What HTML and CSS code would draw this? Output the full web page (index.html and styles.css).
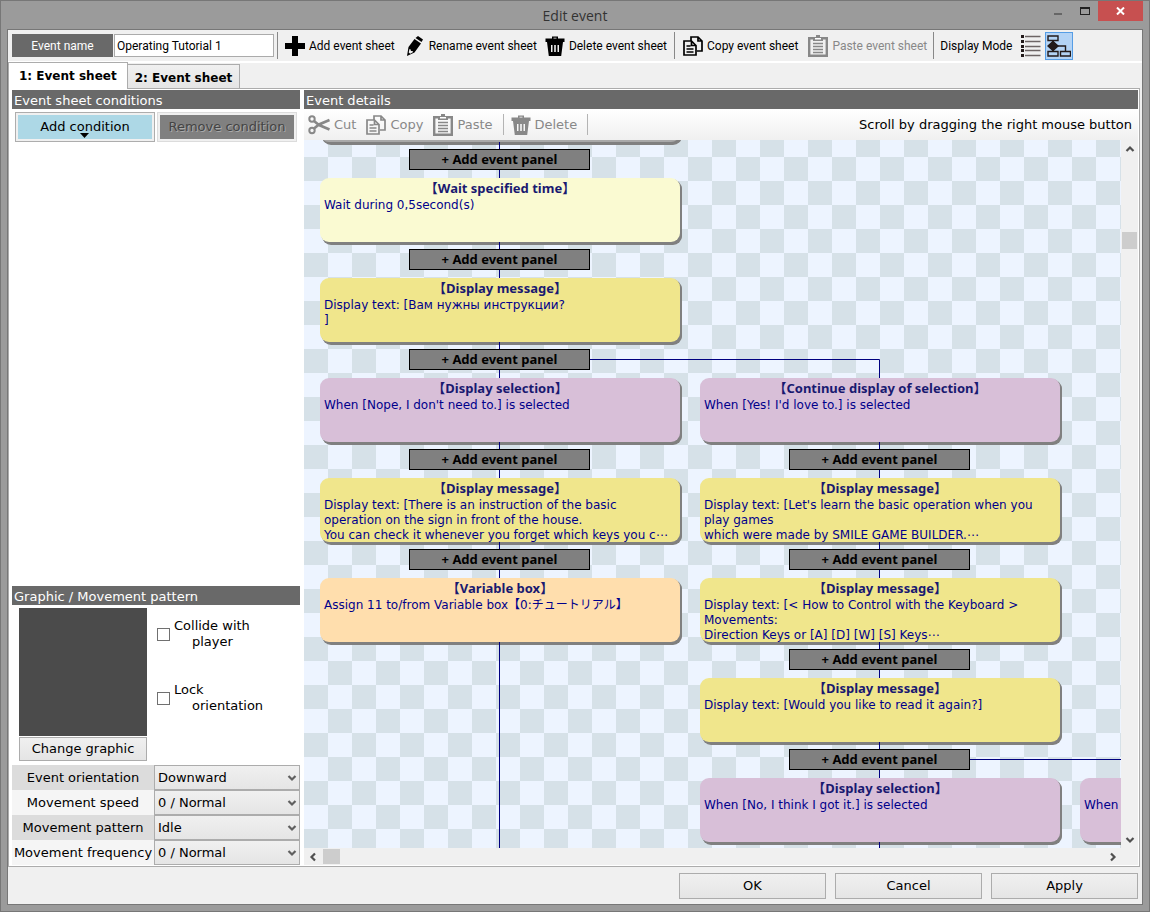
FILE: index.html
```
<!DOCTYPE html>
<html lang="en">
<head>
<meta charset="utf-8">
<title>Edit event</title>
<link rel="stylesheet" href="styles.css">
</head>
<body>
<svg class="defs" aria-hidden="true">
  <symbol id="i-trash" viewBox="0 0 20 20"><path d="M7 2.500V.5h6v2h6.500V6H.5V2.500zM8.500 2.500h3V1.800h-3z" fill="currentColor" fill-rule="evenodd"/><path d="M2 6h16l-1.800 14H3.800zM6 9v7h1.500V9zm3.200 0v7h1.600V9zm3.300 0v7H14V9z" fill="currentColor" fill-rule="evenodd"/></symbol>
  <symbol id="i-copy" viewBox="0 0 20 20"><g fill="none" stroke="currentColor" stroke-width="1.700"><path d="M8 5V1h7l4 4v10h-5M15 1v4h4"/><path d="M1 5h7.500L13 9.500V19H1zM8.500 5v4.500H13M3.500 10h4M3.500 13h7M3.500 16h7"/></g></symbol>
  <symbol id="i-paste" viewBox="0 0 20 22"><path d="M1.200 3.200h17.600v17.600H1.200z" fill="none" stroke="currentColor" stroke-width="2.400"/><path d="M5 2h3V0h4v2h3v4H5z" fill="currentColor"/><path d="M7 3h6v1.500H7z" fill="#fff"/><path d="M5 8.500h10M5 11.500h10M5 14.500h10M5 17.500h10" stroke="currentColor" stroke-width="1.300"/></symbol>
  <symbol id="i-down" viewBox="0 0 10 10"><path d="M1.500 3 5 6.500 8.500 3" fill="none" stroke="currentColor" stroke-width="2.200"/></symbol>
</svg>
<div class="window">
  <header class="titlebar">
    <h1>Edit event</h1>
    <div class="winbtns">
      <button class="winbtn" aria-label="Minimize"><svg width="10" height="10" viewBox="0 0 10 10"><path d="M1 7h8v2H1z" fill="#666"/></svg></button>
      <button class="winbtn" aria-label="Maximize"><svg width="10" height="8" viewBox="0 0 10 8"><path d="M0 0h10v8H0zM1 2v5h8V2z" fill="#222" fill-rule="evenodd"/></svg></button>
      <button class="winbtn close" aria-label="Close"><svg width="9" height="8" viewBox="0 0 9 8"><path d="m1 .5 7 7M8 .5l-7 7" stroke="#fff" stroke-width="2"/></svg></button>
    </div>
  </header>
  <div class="client">
    <div class="toolbar">
      <label class="name-label" for="name">Event name</label>
      <input class="name-input" id="name" type="text" value="Operating Tutorial 1">
      <span class="sep"></span>
      <button class="tool add"><svg width="20" height="20" viewBox="0 0 20 20"><path d="M7 0h6v7h7v6h-7v7H7v-7H0V7h7z"/></svg>Add event sheet</button>
      <button class="tool rename"><svg width="20" height="20" viewBox="0 0 20 20"><path d="m10.500 2 2.500-2 5 3.500L16.500 6z"/><path d="M9.500 3 16 7.500 9.500 16.500 2 20l1.500-9zM4.500 13l-.8 3.500 1.500 1.200 3-1.800-.8-1-1.500.2-.2-1.500z" fill-rule="evenodd"/></svg>Rename event sheet</button>
      <button class="tool delete"><svg width="20" height="20"><use href="#i-trash"/></svg>Delete event sheet</button>
      <span class="sep"></span>
      <button class="tool copy"><svg width="20" height="20"><use href="#i-copy"/></svg>Copy event sheet</button>
      <button class="tool paste" disabled><svg width="20" height="22"><use href="#i-paste"/></svg>Paste event sheet</button>
      <span class="sep"></span>
      <span class="mode-label">Display Mode</span>
      <button class="mode" aria-label="List view"><svg width="20" height="22" viewBox="0 0 20 22"><path d="M0 0h3v3H0zM0 5h3v3H0zM0 10h3v3H0zM0 14h3v3H0zM0 19h3v3H0z" fill="#221a1a"/><path d="M4 1.500h15.500M4 6.500h15.500M4 11.500h15.500M4 15.500h15.500M4 20.500h15.500" stroke="#6d6565" stroke-width="1.500"/></svg></button>
      <button class="mode on" aria-label="Flow view"><svg width="24" height="22" viewBox="0 0 24 22" fill="none" stroke="#221a1a" stroke-width="1.400"><path d="M1 1h10v4.500H1zM1 16.500h10V21H1zM13.500 16.500h10V21h-10zM6 5.500v11M6 11h12.500v5.500"/><path d="m6 6.500 5 4.500-5 4.500L1 11z" fill="#221a1a"/></svg></button>
    </div>
    <nav class="tabs">
      <button class="tab active">1: Event sheet</button>
      <button class="tab">2: Event sheet</button>
    </nav>
    <main class="page">
      <section class="side">
        <h2>Event sheet conditions</h2>
        <div class="cond-btns">
          <button class="cond">Add condition<svg class="caret" width="9" height="5" viewBox="0 0 9 5"><path d="M0 0h9L4.500 5z"/></svg></button>
          <button class="cond off" disabled>Remove condition</button>
        </div>
        <div class="cond-list"></div>
        <h2>Graphic / Movement pattern</h2>
        <div class="graphic">
          <div class="preview-col">
            <div class="preview"></div>
            <button class="btn change">Change graphic</button>
          </div>
          <div class="checks">
            <label class="check"><input type="checkbox"><span>Collide with<br><span class="indent">player</span></span></label>
            <label class="check"><input type="checkbox"><span>Lock<br><span class="indent">orientation</span></span></label>
          </div>
        </div>
        <div class="props">
          <label for="p1">Event orientation</label>
          <div class="combo"><select id="p1"><option>Downward</option></select><svg width="10" height="10"><use href="#i-down"/></svg></div>
          <label for="p2">Movement speed</label>
          <div class="combo"><select id="p2"><option>0 / Normal</option></select><svg width="10" height="10"><use href="#i-down"/></svg></div>
          <label for="p3">Movement pattern</label>
          <div class="combo"><select id="p3"><option>Idle</option></select><svg width="10" height="10"><use href="#i-down"/></svg></div>
          <label for="p4">Movement frequency</label>
          <div class="combo"><select id="p4"><option>0 / Normal</option></select><svg width="10" height="10"><use href="#i-down"/></svg></div>
        </div>
      </section>
      <section class="details">
        <h2>Event details</h2>
        <div class="editbar">
          <button class="edit" disabled><svg width="22" height="20" viewBox="0 0 22 20" fill="none" stroke="currentColor" stroke-width="2"><circle cx="4" cy="4" r="2.700"/><circle cx="4" cy="15.500" r="2.700"/><path d="m6 6 5 4 10.500 4.500M6 13.500l5-4L21.500 5" stroke-width="2.600"/></svg>Cut</button>
          <button class="edit" disabled><svg width="20" height="20"><use href="#i-copy"/></svg>Copy</button>
          <button class="edit" disabled><svg width="20" height="22"><use href="#i-paste"/></svg>Paste</button>
          <span class="sep light"></span>
          <button class="edit trash" disabled><svg width="20" height="20"><use href="#i-trash"/></svg>Delete</button>
          <span class="sep light"></span>
          <span class="hint">Scroll by dragging the right mouse button</span>
        </div>
        <div class="viewport">
          <div class="canvas">
            <svg class="links" width="2000" height="1000" fill="none" stroke="#000080"><path d="M195.500 0v1000M195.500 219.500h380V1000M575.500 619.500h380V1000"/></svg>
            <article class="panel note" style="--col:0;--row:-1"></article>
            <button class="insert" style="--col:0;--row:-1">+ Add event panel</button>
            <article class="panel wait" style="--col:0;--row:0"><h3>【Wait specified time】</h3><p>Wait during 0,5second(s)</p></article>
            <button class="insert" style="--col:0;--row:0">+ Add event panel</button>
            <article class="panel talk" style="--col:0;--row:1"><h3>【Display message】</h3><p>Display text: [Вам нужны инструкции?<br>]</p></article>
            <button class="insert" style="--col:0;--row:1">+ Add event panel</button>
            <article class="panel choice" style="--col:0;--row:2"><h3>【Display selection】</h3><p>When [Nope, I don't need to.] is selected</p></article>
            <button class="insert" style="--col:0;--row:2">+ Add event panel</button>
            <article class="panel talk" style="--col:0;--row:3"><h3>【Display message】</h3><p>Display text: [There is an instruction of the basic<br>operation on the sign in front of the house.<br>You can check it whenever you forget which keys you c⋯</p></article>
            <button class="insert" style="--col:0;--row:3">+ Add event panel</button>
            <article class="panel var" style="--col:0;--row:4"><h3>【Variable box】</h3><p>Assign 11 to/from Variable box【0:チュートリアル】</p></article>

            <article class="panel choice" style="--col:1;--row:2"><h3>【Continue display of selection】</h3><p>When [Yes! I'd love to.] is selected</p></article>
            <button class="insert" style="--col:1;--row:2">+ Add event panel</button>
            <article class="panel talk" style="--col:1;--row:3"><h3>【Display message】</h3><p>Display text: [Let's learn the basic operation when you<br>play games<br>which were made by SMILE GAME BUILDER.⋯</p></article>
            <button class="insert" style="--col:1;--row:3">+ Add event panel</button>
            <article class="panel talk" style="--col:1;--row:4"><h3>【Display message】</h3><p>Display text: [&lt; How to Control with the Keyboard &gt;<br>Movements:<br>Direction Keys or [A] [D] [W] [S] Keys⋯</p></article>
            <button class="insert" style="--col:1;--row:4">+ Add event panel</button>
            <article class="panel talk" style="--col:1;--row:5"><h3>【Display message】</h3><p>Display text: [Would you like to read it again?]</p></article>
            <button class="insert" style="--col:1;--row:5">+ Add event panel</button>
            <article class="panel choice" style="--col:1;--row:6"><h3>【Display selection】</h3><p>When [No, I think I got it.] is selected</p></article>

            <article class="panel choice" style="--col:2;--row:6"><p class="untitled">When</p></article>
          </div>
          <div class="vbar">
            <button class="arrow" aria-label="Scroll up"><svg class="up" width="10" height="10"><use href="#i-down"/></svg></button>
            <div class="track"><div class="thumb"></div></div>
            <button class="arrow" aria-label="Scroll down"><svg width="10" height="10"><use href="#i-down"/></svg></button>
          </div>
          <div class="hbar">
            <button class="arrow" aria-label="Scroll left"><svg class="left" width="10" height="10"><use href="#i-down"/></svg></button>
            <div class="track"><div class="thumb"></div></div>
            <button class="arrow" aria-label="Scroll right"><svg class="right" width="10" height="10"><use href="#i-down"/></svg></button>
          </div>
        </div>
      </section>
    </main>
    <footer class="footer">
      <button class="btn">OK</button>
      <button class="btn">Cancel</button>
      <button class="btn">Apply</button>
    </footer>
  </div>
</div>
</body>
</html>
```

FILE: styles.css
```
* { box-sizing: border-box; }
body {
  margin: 0;
  font: 13px/16px "DejaVu Sans", "Noto Sans CJK JP", sans-serif;
  color: #000;
}
button, input, select { font: inherit; color: inherit; margin: 0; border-radius: 0; }
button { padding: 0; border: 0; background: none; white-space: nowrap; }
svg { flex: none; }
.defs { position: absolute; width: 0; height: 0; }

.window {
  height: 100vh;
  display: flex;
  flex-direction: column;
  padding: 0 7px 7px;
  background: #9b9b9b;
  border: 1px solid #777;
}
.titlebar { display: flex; height: 29px; flex: none; position: relative; justify-content: center; }
.titlebar h1 { margin: 0; font: 14px/30px "Open Sans", sans-serif; color: #333; }
.winbtns { position: absolute; top: 0; right: -1px; display: flex; }
.winbtn { width: 27px; height: 20px; display: flex; align-items: center; justify-content: center; }
.winbtn.close { width: 45px; background: #c75050; }

.client {
  flex: 1;
  min-height: 0;
  display: flex;
  flex-direction: column;
  background: #f0f0f0;
  outline: 1px solid #777;
}
.toolbar {
  height: 33px;
  flex: none;
  display: flex;
  align-items: center;
  padding-left: 4px;
  border-bottom: 2px solid #fff;
  font: 12px/16px Roboto, sans-serif;
}
.name-label { width: 101px; height: 23px; background: #696969; color: #fff; text-align: center; line-height: 24px; }
.name-input { width: 160px; height: 23px; margin: 0 3px 0 1px; padding: 0 2px; border: 1px solid #ababab; background: #fff; }
.sep { width: 1px; height: 27px; flex: none; background: #888; }
.sep.light { height: 21px; background: #b4b4b4; }
.tool { display: flex; align-items: center; gap: 4px; height: 28px; }
.tool:disabled, .edit:disabled { color: #888; }
.tool.add { margin-left: 7px; }
.tool.rename { margin-left: 10px; }
.tool.delete { margin: 0 7px 0 8px; }
.tool.copy { margin: 0 10px 0 8px; }
.tool.paste { margin-right: 6px; }
.sep + .mode-label { margin: 0 8px 0 6px; }
.mode { width: 22px; height: 28px; display: flex; align-items: center; justify-content: center; margin-right: 3px; }
.mode.on { width: 28px; border: 1px solid #569de5; background: #b3d3f5; }

.tabs { display: flex; align-items: flex-end; height: 25px; flex: none; font: bold 12px/16px "DejaVu Sans", sans-serif; }
.tab { height: 24px; padding: 2px 7px 0; border: 1px solid #acacac; border-bottom: 0; background: linear-gradient(#f0f0f0, #e5e5e5); }
.tab.active { height: 27px; padding: 0 10px; background: #fff; margin: 0 -1px -1px 0; position: relative; z-index: 1; }

.page {
  flex: 1;
  min-height: 0;
  display: flex;
  gap: 4px;
  margin-right: 2px;
  padding: 1px 1px 1px 3px;
  background: #fff;
  border: 1px solid #acacac;
}
h2 { margin: 0; flex: none; height: 19px; padding-left: 2px; font: 13px/21px "DejaVu Sans", sans-serif; color: #fff; background: #696969; }
.side { width: 288px; flex: none; display: flex; flex-direction: column; }
.cond-btns { display: flex; gap: 2px; padding: 3px; }
.cond { flex: 1; height: 30px; border: 1px solid #adadad; padding: 1px; background: #add8e6; box-shadow: inset 0 0 0 2px #f0f0f0; position: relative; }
.cond.off { background: #808080; border-color: #dcdcdc; color: #444; text-shadow: 1px 1px 0 #aaa; }
.caret { position: absolute; left: 50%; bottom: 3px; margin-left: -5px; }
.cond-list { flex: 1; }
.graphic { display: flex; gap: 10px; padding: 3px 7px 4px; }
.preview-col { width: 128px; display: flex; flex-direction: column; gap: 1px; }
.preview { height: 128px; background: #4b4b4b; }
.btn { height: 26px; border: 1px solid #acacac; background: linear-gradient(#f0f0f0, #e5e5e5); }
.change { height: 24px; }
.checks { display: flex; flex-direction: column; gap: 32px; padding-top: 10px; }
.check { display: flex; align-items: center; gap: 4px; }
.check input { appearance: none; width: 13px; height: 13px; margin: 0; border: 1px solid #707070; background: #fff; }
.indent { padding-left: 18px; }
.props { display: grid; grid-template-columns: 142px 1fr; grid-auto-rows: 25px; }
.props label { text-align: center; line-height: 25px; background: #f5f5f5; white-space: nowrap; }
.props label:nth-of-type(odd) { background: #dcdcdc; }
.combo { position: relative; }
.combo select { appearance: none; width: 100%; height: 25px; padding: 1px 3px 0; border: 1px solid #acacac; background: linear-gradient(#f0f0f0, #e5e5e5); }
.combo svg { position: absolute; right: 3px; top: 8px; color: #606060; pointer-events: none; }

.details { flex: 1; min-width: 0; display: flex; flex-direction: column; }
.editbar { display: flex; align-items: center; gap: 10px; height: 31px; flex: none; padding: 0 6px 0 4px; background: linear-gradient(#fff, #f0f0f0); }
.edit { display: flex; align-items: center; gap: 4px; }
.edit.trash { margin-left: -3px; }
.hint { margin-left: auto; white-space: nowrap; }
.viewport { flex: 1; min-height: 0; display: grid; grid-template: 1fr 17px / 1fr 17px; background: #f0f0f0; }
.canvas {
  position: relative;
  overflow: hidden;
  background: repeating-conic-gradient(#d6e1e8 0 25%, #edf4ff 0 50%) 0 -7px / 48px 48px;
}
.links { position: absolute; left: 0; top: 0; }
.panel {
  position: absolute;
  left: calc(16px + var(--col) * 380px);
  top: calc(38px + var(--row) * 100px);
  width: 360px;
  height: 64px;
  padding: 2px 4px 0;
  border-radius: 9px;
  box-shadow: 1px 1px 0 #808080, 2px 2px 0 #808080, 2px 3px 0 #808080;
  font: 12px/15px "DejaVu Sans", "Noto Sans CJK JP", sans-serif;
  color: #00008b;
  white-space: nowrap;
}
.panel::after { content: ""; position: absolute; left: 179px; top: 100%; width: 1px; height: 3px; background: #000080; }
.panel h3 { margin: 0; height: 18px; font: bold 13px/17px "Noto Sans", "Noto Sans CJK JP", sans-serif; color: #191970; text-align: center; }
.panel p { margin: 0; }
.panel .untitled { padding-top: 18px; }
.wait { background: #fafad2; }
.talk { background: #f0e68c; }
.choice { background: #d8bfd8; }
.var { background: #ffdead; }
.note { background: #a9a9a9; }
.insert {
  position: absolute;
  left: calc(105px + var(--col) * 380px);
  top: calc(109px + var(--row) * 100px);
  width: 181px;
  height: 21px;
  border: 1px solid #000;
  background: #808080;
  font: bold 13px/19px "Noto Sans", sans-serif;
}
.vbar { display: flex; flex-direction: column; }
.hbar { display: flex; grid-column: 1; }
.arrow { width: 17px; height: 17px; display: flex; align-items: center; justify-content: center; color: #505050; }
.up { transform: rotate(180deg); }
.left { transform: rotate(90deg); }
.right { transform: rotate(-90deg); }
.track { flex: 1; display: flex; }
.thumb { background: #cdcdcd; }
.vbar .track { flex-direction: column; padding: 75px 1px 0; }
.vbar .thumb { height: 17px; }
.hbar .track { padding: 1px 2px; }
.hbar .thumb { width: 17px; }

.footer { display: flex; justify-content: flex-end; align-items: center; gap: 9px; height: 37px; flex: none; padding-right: 4px; }
.footer .btn { width: 147px; }
```
